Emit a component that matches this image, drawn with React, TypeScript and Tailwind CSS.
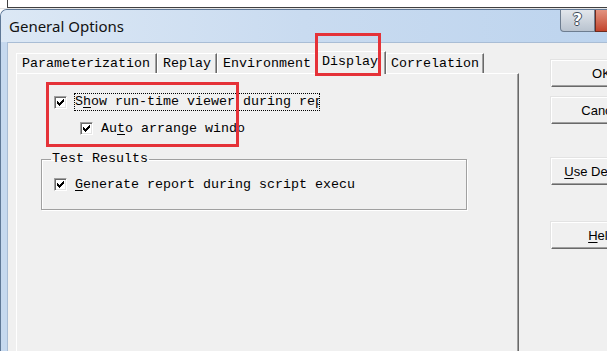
import React from "react";

const mono = "font-['Liberation_Mono',monospace] text-[13.33px] leading-[16px] text-black";
const sans = "font-['Liberation_Sans',Arial,sans-serif] text-[13px] text-black";

function Check() {
  return (
    <span className="w-[13px] h-[13px] shrink-0 bg-white border-t border-l border-[#a0a0a0] border-r border-b border-r-white border-b-white shadow-[inset_1px_1px_0_#696969,inset_-1px_-1px_0_#e3e3e3] flex items-center justify-center">
      <svg width="7" height="7" viewBox="0 0 7 7" shapeRendering="crispEdges">
        <path
          fill="#000"
          d="M6 0h1v1h-1z M5 1h2v1h-2z M0 2h1v1h-1z M4 2h3v1h-3z M0 3h2v1h-2z M3 3h3v1h-3z M0 4h5v1h-5z M1 5h3v1h-3z M2 6h1v1h-1z"
        />
      </svg>
    </span>
  );
}

function Tab({ label, w, pl, selected }: { label: string; w: number; pl: number; selected?: boolean }) {
  return (
    <div
      style={{ width: w, paddingLeft: pl }}
      className={
        selected
          ? `relative z-10 -ml-[2px] -mb-[1px] h-[23px] pt-[2px] bg-[#f0f0f0] border-l border-t border-white border-r border-r-[#696969] shadow-[inset_-1px_0_0_#a0a0a0] ${mono}`
          : `h-[20px] pt-[2px] border-l border-t border-white border-r border-r-[#696969] shadow-[inset_-1px_0_0_#a0a0a0] ${mono}`
      }
    >
      {label}
    </div>
  );
}

function DlgButton({ children, mt }: { children: React.ReactNode; mt: string }) {
  return (
    <div
      className={`${mt} w-[100px] h-[27px] shrink-0 flex items-center justify-center bg-[#f0f0f0] border-t border-l border-white border-b border-b-[#696969] shadow-[inset_0_-1px_0_#a0a0a0,-1px_-1px_0_#e3e3e3] ${sans} whitespace-nowrap`}
    >
      {children}
    </div>
  );
}

export default function App() {
  return (
    <div className="relative w-[607px] h-[351px] overflow-hidden bg-white flex flex-col">
      {/* edge of window behind */}
      <div className="h-[9px] shrink-0 flex flex-col bg-white">
        <div className="ml-[7px] h-[8px] border-l border-b border-[#404040] bg-white" />
        <div className="h-[1px] bg-[#e4e4e4]" />
      </div>

      {/* dialog */}
      <div className="flex-1 flex flex-col rounded-tl-[7px] border-l border-t border-[#5f7896] bg-[#c6d9ef] overflow-hidden">
        {/* title bar */}
        <div className="h-[32px] shrink-0 flex items-start justify-between bg-gradient-to-r from-[#dce8f5] via-[#c9dbf0] to-[#bdd4ee]">
          <div className="pl-[8px] pt-[6px] font-['Noto_Sans',sans-serif] text-[15px] leading-[20px] text-[#111]">
            General Options
          </div>
          <div className="flex -mt-[2px]">
            <div className="w-[35px] h-[24px] rounded-bl-[4px] border border-t-0 border-[#6d7d90] bg-gradient-to-b from-[#e6eaef] to-[#b9c3cf] flex items-center justify-center">
              <span className="font-['DejaVu_Sans',sans-serif] font-bold text-[16px] leading-[16px] text-white [text-shadow:-1px_0_0_#3d4a5a,1px_0_0_#3d4a5a,0_-1px_0_#3d4a5a,0_1px_0_#3d4a5a]">
                ?
              </span>
            </div>
            <div className="w-[12px] h-[24px] border-b border-l border-[#6e2a1e] bg-gradient-to-b from-[#e49a88] to-[#c2432c]" />
          </div>
        </div>

        {/* body */}
        <div className="flex-1 flex pl-[6px]">
          <div className="flex-1 flex bg-[#f0f0f0] border-l border-t border-[#a9bdd5] pl-[8px]">
            {/* tab control */}
            <div className="w-[503px] shrink-0 flex flex-col pt-[8px]">
              <div className="h-[22px] shrink-0 flex items-end">
                <Tab label="Parameterization" w={141} pl={5} />
                <Tab label="Replay" w={60} pl={5} />
                <Tab label="Environment" w={101} pl={5} />
                <Tab label="Display" w={70} pl={5} selected />
                <Tab label="Correlation" w={98} pl={4} />
              </div>
              <div className="flex-1 flex flex-col border-l border-t border-white border-r border-r-[#696969] shadow-[inset_-1px_0_0_#a0a0a0]">
                {/* row 1 */}
                <div className="mt-[19px] ml-[37px] h-[18px] flex items-center">
                  <Check />
                  <span
                    className={`ml-[7px] w-[246px] h-[18px] border border-dotted border-black overflow-hidden whitespace-nowrap ${mono}`}
                  >
                    S<u className="underline underline-offset-[2px]">h</u>ow run-time viewer during report
                  </span>
                </div>
                {/* row 2 */}
                <div className="mt-[9px] ml-[63px] h-[17px] flex items-center">
                  <Check />
                  <span className={`ml-[8px] whitespace-nowrap ${mono}`}>
                    Au<u className="underline underline-offset-[2px]">t</u>o arrange windo
                  </span>
                </div>
                {/* group box */}
                <fieldset className="mt-[14px] ml-[24px] w-[426px] border border-[#a0a0a0] shadow-[1px_1px_0_#fff,inset_1px_1px_0_#fff] pb-[16px]">
                  <legend className={`ml-[9px] px-[1px] ${mono}`}>Test Results</legend>
                  <div className="mt-[9px] ml-[12px] h-[17px] flex items-center">
                    <Check />
                    <span className={`ml-[8px] whitespace-nowrap ${mono}`}>
                      <u className="underline underline-offset-[2px]">G</u>enerate report during script execu
                    </span>
                  </div>
                </fieldset>
              </div>
            </div>

            {/* right buttons */}
            <div className="ml-[32px] flex flex-col">
              <DlgButton mt="mt-[17px]">OK</DlgButton>
              <DlgButton mt="mt-[10px]">Cancel</DlgButton>
              <DlgButton mt="mt-[34px]">
                <span>
                  <u className="underline underline-offset-[2px]">U</u>se Defaults
                </span>
              </DlgButton>
              <DlgButton mt="mt-[37px]">
                <span>
                  <u className="underline underline-offset-[2px]">H</u>elp
                </span>
              </DlgButton>
            </div>
          </div>
        </div>
      </div>

      {/* red annotation rectangles */}
      <div className="absolute left-[315px] top-[33px] w-[66px] h-[43px] border-[3px] border-[#e53238] pointer-events-none z-20" />
      <div className="absolute left-[46px] top-[82px] w-[193px] h-[65px] border-[3px] border-[#e53238] pointer-events-none z-20" />
    </div>
  );
}
